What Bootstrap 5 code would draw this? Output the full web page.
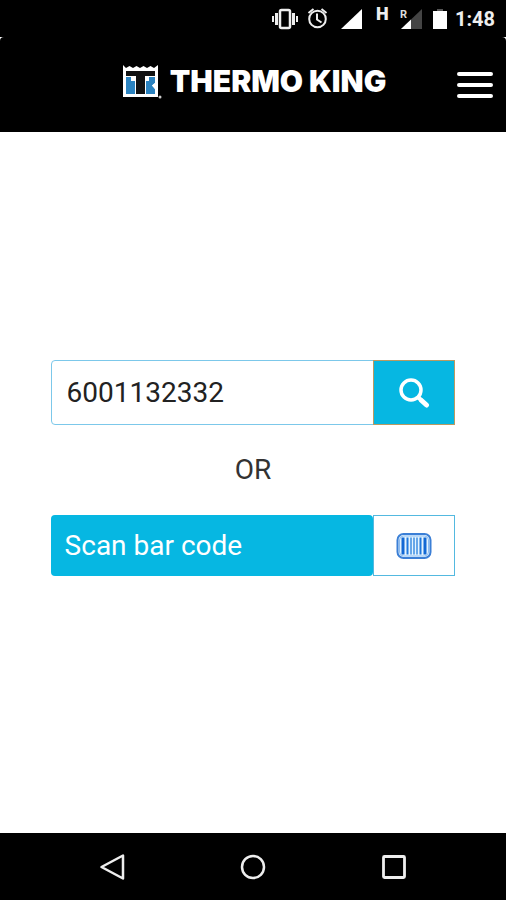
<!DOCTYPE html>
<html lang="en">
<head>
<meta charset="utf-8">
<meta name="viewport" content="width=device-width, initial-scale=1">
<title>Thermo King</title>
<link href="https://cdn.jsdelivr.net/npm/bootstrap@5.3.0/dist/css/bootstrap.min.css" rel="stylesheet">
<style>
  :root { --tk-blue: #06b7e2; --tk-line: #7cc8ea; --tk-focus: #b99a62; }
  body { font-family: Roboto, sans-serif; font-size: 28px; line-height: 36px; color: #222; }
  .status-bar { height: 37px; padding-right: 11px; font-size: 20px; line-height: 36px; font-weight: 700; color: #eee; }
  .status-bar svg, .brand svg, .soft-keys svg, .lookup svg { display: block; flex: none; }
  .app-header { height: 95px; border-radius: 4px 4px 0 0; padding: 0 11px 0 13px; }
  .brand { gap: 8px; color: #fff; font: 900 30px/36px Inter, sans-serif; padding-bottom: 8px; }
  .brand:hover { color: #fff; }
  .menu-btn { width: 38px; right: 12px; top: 30px; }
  .screen { padding-top: 228px; }
  .lookup { width: 80%; }
  .lookup .form-control { height: 65px; padding: 0 15px; font-size: 28px; color: #222; border: 1px solid var(--tk-line); border-radius: 4px 0 0 4px; }
  .side-btn { width: 82px; border-radius: 0; }
  .search-btn, .search-btn:hover { background: var(--tk-blue); border: 1px solid var(--tk-focus); }
  .or-text { padding: 27px 0; color: #333; }
  .scan-btn, .scan-btn:hover { height: 61px; padding: 0 14px; font-size: 28px; color: #fff; background: var(--tk-blue); border: 0; border-radius: 4px; }
  .code-btn, .code-btn:hover { background: #fff; border: 1px solid #53b9e0; }
  .soft-keys { height: 67px; padding: 0 42px; }
</style>
</head>
<body class="bg-white d-flex flex-column min-vh-100">
  <div class="status-bar bg-black d-flex align-items-center justify-content-end">
    <svg width="184" height="36" viewBox="0 0 184 36" aria-hidden="true">
      <g fill="none" stroke="#eee" stroke-width="2">
        <rect x="9" y="9" width="10" height="18" rx="1.5" stroke-width="2.5"/>
        <path d="M5.500 12v12M22.500 12v12" stroke-width="3"/>
        <path d="M2 15v6M26 15v6"/>
        <circle cx="46.500" cy="18" r="8.300"/>
        <path d="M46 12.500v6l4.500 3M37.500 12l5-4M55.500 12l-5-4"/>
      </g>
      <path d="M91 8v20H70z" fill="#fff"/>
      <path d="M151 8v20h-21z" fill="#444"/>
      <path d="M140 18.500V28h-10z" fill="#fff"/>
      <path d="M162 10h14v18h-14z" fill="#fff"/>
      <path d="M166 8h6v2h-6z" fill="#555"/>
      <text x="105" y="19" font-family="Roboto, sans-serif" font-size="18" font-weight="900" fill="#eee">H</text>
      <text x="129" y="17" font-family="Roboto, sans-serif" font-size="11" font-weight="700" fill="#ddd">R</text>
    </svg>
    <span>1:48</span>
  </div>

  <header class="app-header bg-black position-relative d-flex align-items-center justify-content-center">
    <a href="#" class="brand d-flex align-items-center text-decoration-none">
      <svg width="40" height="36" viewBox="0 0 40 36" aria-hidden="true">
        <path d="M1 2l3 3 3.500-2L11 5l3.500-2L18 5l3.500-2L25 5l3.500-2L32 5l4-3v32H1z" fill="#fff"/>
        <path d="M4 8h29v5H4z" fill="#111"/>
        <path d="M4 14h9v17H4z" fill="#2b83c0"/>
        <path d="M24 14h9v6l-3 2.500 3 3.500v5h-9z" fill="#2b83c0"/>
        <path d="M9 14h4v4H9zM24 14h3v4h-3zM33 20l-3 2.500 3 3.500z" fill="#fff"/>
        <path d="M14 10h9v21h-9z" fill="#111"/>
        <circle cx="38" cy="34" r="1.500" fill="#ccc"/>
      </svg>
      <span>THERMO KING</span>
    </a>
    <button type="button" class="menu-btn btn p-0 border-0 position-absolute" aria-label="Menu">
      <svg width="38" height="36" viewBox="0 0 38 36" class="d-block" stroke="#fff" stroke-width="4" stroke-linecap="round"><path d="M3 7h32M3 18h32M3 29h32"/></svg>
    </button>
  </header>

  <main class="screen flex-grow-1">
    <form class="lookup mx-auto">
      <div class="input-group flex-nowrap">
        <input type="text" class="form-control shadow-none" value="6001132332" aria-label="Serial number">
        <button type="button" class="btn side-btn search-btn p-0 d-flex align-items-center justify-content-center" aria-label="Search">
          <svg width="32" height="32" viewBox="0 0 32 32" fill="none" stroke="#fff" aria-hidden="true">
            <circle cx="13" cy="13" r="10" stroke-width="3.500"/>
            <path d="M20 20l3 3" stroke-width="4"/>
            <path d="M23.500 23.500l5 4.500" stroke-width="5" stroke-linecap="round"/>
          </svg>
        </button>
      </div>
      <div class="or-text text-center">OR</div>
      <div class="d-flex">
        <button type="button" class="btn scan-btn flex-grow-1 text-start">Scan bar code</button>
        <button type="button" class="btn side-btn code-btn p-0 d-flex align-items-center justify-content-center" aria-label="Bar code">
          <svg width="36" height="28" viewBox="0 0 36 28" aria-hidden="true">
            <rect x="1.500" y="2" width="33" height="24" rx="6" fill="#e4f4ff" stroke="#3b7fd6" stroke-width="2"/>
            <rect x="3.500" y="4" width="29" height="20" rx="4" fill="none" stroke="#8fbdf0"/>
            <path d="M7 5.500v17M29 5.500v17" stroke="#1268d4" stroke-width="3"/>
            <path d="M11.500 5.500v17M24.500 5.500v17" stroke="#1f78dd" stroke-width="2"/>
            <path d="M15 5.500v17M18 5.500v17M21 5.500v17" stroke="#3c8de2" stroke-width="1.500"/>
          </svg>
        </button>
      </div>
    </form>
  </main>

  <nav class="soft-keys bg-black d-flex align-items-center" aria-label="System">
    <div class="d-flex w-100 justify-content-around">
      <button type="button" class="btn p-0 border-0" aria-label="Back"><svg width="28" height="28" viewBox="0 0 28 28" fill="none" stroke="#eee" stroke-width="2.500"><path d="M25 2.500v23L3.500 14z" stroke-linejoin="round"/></svg></button>
      <button type="button" class="btn p-0 border-0" aria-label="Home"><svg width="28" height="28" viewBox="0 0 28 28" fill="none" stroke="#eee" stroke-width="2.500"><circle cx="14" cy="14" r="11"/></svg></button>
      <button type="button" class="btn p-0 border-0" aria-label="Recent apps"><svg width="28" height="28" viewBox="0 0 28 28" fill="none" stroke="#eee" stroke-width="2.800"><rect x="3.500" y="3.500" width="21" height="21" rx="1"/></svg></button>
    </div>
  </nav>
<script src="https://cdn.jsdelivr.net/npm/bootstrap@5.3.0/dist/js/bootstrap.bundle.min.js"></script>
</body>
</html>
